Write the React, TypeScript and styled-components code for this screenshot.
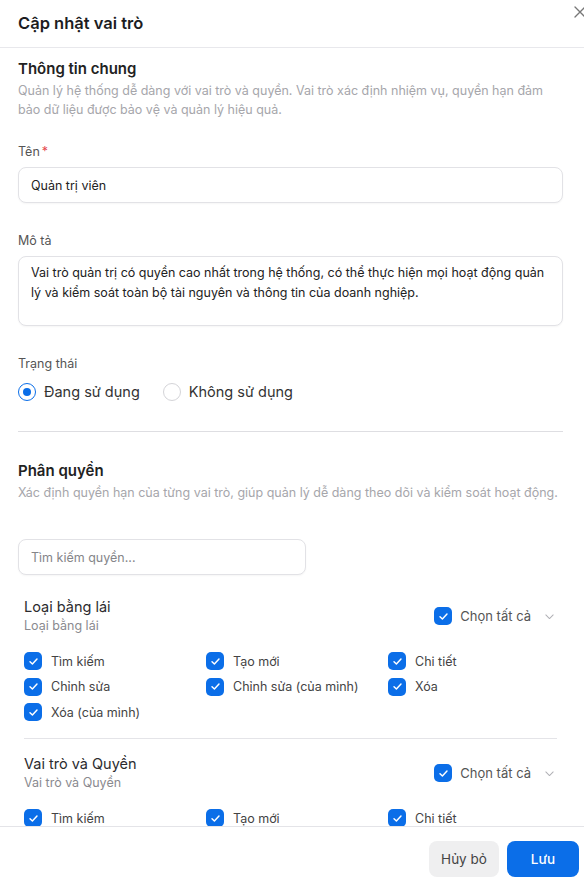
import * as React from 'react';
import styled, { createGlobalStyle } from 'styled-components';

const blue = '#0b6ee8';

const GlobalStyle = createGlobalStyle`
  html, body {
    margin: 0;
    padding: 0;
    background: #ffffff;
    font-family: Inter, "Noto Sans", "Liberation Sans", sans-serif;
    overflow: hidden;
  }
  * { box-sizing: border-box; }
`;

const Viewport = styled.div`
  width: 584px;
  height: 883px;
  overflow: hidden;
`;

const Dialog = styled.div`
  width: 596px;
  display: flex;
  flex-direction: column;
  background: #fff;
`;

const Header = styled.div`
  height: 48px;
  padding: 0 10px 0 18px;
  display: flex;
  align-items: center;
  justify-content: space-between;
  border-bottom: 1px solid #e8e8ec;
`;

const Title = styled.h1`
  margin: -1px 0 0;
  font-size: 16.5px;
  font-weight: 600;
  color: #1d1d1f;
  line-height: 22px;
`;

const CloseButton = styled.button`
  border: 0;
  background: none;
  padding: 0;
  margin-top: -24px;
  color: #777;
  display: flex;
`;

const Body = styled.div`
  height: 778px;
  overflow: hidden;
  padding: 10px 33px 0 18px;
`;

const SectionTitle = styled.h2`
  margin: 0;
  font-size: 15px;
  font-weight: 600;
  line-height: 22px;
  color: #222;
`;

const SectionDesc = styled.p`
  margin: 1px 0 0;
  font-size: 12.5px;
  line-height: 19px;
  color: #a6a6ab;
`;

const Field = styled.div`
  margin-top: ${({ $gap }: { $gap: number }) => $gap}px;
`;

const Label = styled.div`
  font-size: 12.5px;
  line-height: 20px;
  color: #555;
  margin-bottom: 5px;
`;

const Required = styled.span`
  color: #e5484d;
  margin-left: 2px;
`;

const TextInput = styled.input`
  display: block;
  width: ${({ $width }: { $width?: number }) => ($width ? `${$width}px` : '100%')};
  height: 36px;
  padding: 0 12px;
  border: 1px solid #e2e2e6;
  border-radius: 8px;
  box-shadow: 0 1px 2px rgba(0, 0, 0, 0.04);
  font-family: inherit;
  font-size: 12.5px;
  color: #222;
  outline: none;
  &::placeholder {
    color: #858589;
  }
`;

const TextArea = styled.textarea`
  display: block;
  width: 100%;
  height: 70px;
  padding: 6px 12px;
  border: 1px solid #e2e2e6;
  border-radius: 8px;
  box-shadow: 0 1px 2px rgba(0, 0, 0, 0.04);
  font-family: inherit;
  font-size: 12.5px;
  line-height: 20px;
  color: #222;
  resize: none;
  outline: none;
`;

const RadioRow = styled.div`
  display: flex;
  gap: 23px;
  margin-top: 7px;
`;

const RadioOption = styled.label`
  display: flex;
  align-items: center;
  gap: 8px;
  font-size: 14.5px;
  line-height: 22px;
  color: #333;
`;

const RadioCircle = styled.span<{ $checked: boolean }>`
  width: 18px;
  height: 18px;
  border-radius: 50%;
  border: 1px solid ${({ $checked }) => ($checked ? blue : '#d4d4d8')};
  display: flex;
  align-items: center;
  justify-content: center;
  &::after {
    content: '';
    width: 8px;
    height: 8px;
    border-radius: 50%;
    background: ${({ $checked }) => ($checked ? blue : 'transparent')};
  }
`;

const Divider = styled.hr`
  margin: 28px 0 28px;
  border: 0;
  border-top: 1px solid #dedee2;
`;

const SearchWrap = styled.div`
  margin-top: 37px;
`;

const GroupList = styled.div`
  margin-top: 7px;
`;

const Group = styled.div`
  margin: 0 6px;
  padding: 15px 0 16px;
  border-bottom: 1px solid #e4e4e8;
  &:last-child {
    border-bottom: 0;
  }
`;

const GroupHeader = styled.div`
  display: flex;
  align-items: center;
  justify-content: space-between;
`;

const GroupName = styled.div`
  font-size: 14.5px;
  line-height: 20px;
  color: #2b2b2e;
`;

const GroupSub = styled.div`
  font-size: 12.5px;
  line-height: 18px;
  color: #8a8a8f;
`;

const SelectAll = styled.div`
  display: flex;
  align-items: center;
  gap: 8px;
  font-size: 13px;
  color: #555;
  margin-right: 2px;
`;

const Chevron = styled.span`
  display: flex;
  color: #b0b0b5;
  margin-left: 5px;
`;

const Grid = styled.div`
  display: grid;
  grid-template-columns: repeat(3, 182px);
  row-gap: 5.5px;
  margin-top: 16px;
`;

const CheckItem = styled.label`
  display: flex;
  align-items: center;
  gap: 9px;
  height: 20px;
  font-size: 12.5px;
  color: #444;
`;

const Box = styled.span`
  width: 18px;
  height: 18px;
  border-radius: 5px;
  background: ${blue};
  display: flex;
  align-items: center;
  justify-content: center;
  flex-shrink: 0;
`;

const Footer = styled.div`
  border-top: 1px solid #e4e4e8;
  padding: 14px 17px 14px;
  display: flex;
  justify-content: flex-end;
  gap: 8px;
`;

const Button = styled.button<{ $primary?: boolean }>`
  height: 36px;
  min-width: ${({ $primary }) => ($primary ? 72 : 70)}px;
  padding: 0 12px;
  border: 0;
  border-radius: 8px;
  font-family: inherit;
  font-size: 13.5px;
  font-weight: ${({ $primary }) => ($primary ? 500 : 400)};
  background: ${({ $primary }) => ($primary ? blue : '#efeff0')};
  color: ${({ $primary }) => ($primary ? '#fff' : '#444')};
`;

const Check = () => (
  <svg width="11" height="11" viewBox="0 0 12 12" fill="none">
    <path d="M2.2 6.2 4.8 8.7 9.8 3.4" stroke="#fff" strokeWidth="1.6" strokeLinecap="round" strokeLinejoin="round" />
  </svg>
);

const Checkbox = ({ label }: { label: string }) => (
  <CheckItem>
    <Box>
      <Check />
    </Box>
    {label}
  </CheckItem>
);

type PermissionGroup = { name: string; items: string[] };

const groups: PermissionGroup[] = [
  {
    name: 'Loại bằng lái',
    items: ['Tìm kiếm', 'Tạo mới', 'Chi tiết', 'Chỉnh sửa', 'Chỉnh sửa (của mình)', 'Xóa', 'Xóa (của mình)'],
  },
  {
    name: 'Vai trò và Quyền',
    items: ['Tìm kiếm', 'Tạo mới', 'Chi tiết', 'Chỉnh sửa', 'Chỉnh sửa (của mình)', 'Xóa', 'Xóa (của mình)'],
  },
];

export default function App() {
  return (
    <Viewport>
      <GlobalStyle />
      <Dialog>
        <Header>
          <Title>Cập nhật vai trò</Title>
          <CloseButton>
            <svg width="12" height="12" viewBox="0 0 12 12" fill="none">
              <path d="M1 1l10 10M11 1 1 11" stroke="currentColor" strokeWidth="1.3" strokeLinecap="round" />
            </svg>
          </CloseButton>
        </Header>
        <Body>
          <SectionTitle>Thông tin chung</SectionTitle>
          <SectionDesc>
            Quản lý hệ thống dễ dàng với vai trò và quyền. Vai trò xác định nhiệm vụ, quyền hạn đảm bảo dữ liệu được
            bảo vệ và quản lý hiệu quả.
          </SectionDesc>

          <Field $gap={23}>
            <Label>
              Tên<Required>*</Required>
            </Label>
            <TextInput defaultValue="Quản trị viên" />
          </Field>

          <Field $gap={28}>
            <Label>Mô tả</Label>
            <TextArea defaultValue="Vai trò quản trị có quyền cao nhất trong hệ thống, có thể thực hiện mọi hoạt động quản lý và kiểm soát toàn bộ tài nguyên và thông tin của doanh nghiệp." />
          </Field>

          <Field $gap={28}>
            <Label>Trạng thái</Label>
            <RadioRow>
              <RadioOption>
                <RadioCircle $checked />
                Đang sử dụng
              </RadioOption>
              <RadioOption>
                <RadioCircle $checked={false} />
                Không sử dụng
              </RadioOption>
            </RadioRow>
          </Field>

          <Divider />

          <SectionTitle>Phân quyền</SectionTitle>
          <SectionDesc>Xác định quyền hạn của từng vai trò, giúp quản lý dễ dàng theo dõi và kiểm soát hoạt động.</SectionDesc>

          <SearchWrap>
            <TextInput $width={288} placeholder="Tìm kiếm quyền..." />
          </SearchWrap>

          <GroupList>
            {groups.map((g) => (
              <Group key={g.name}>
                <GroupHeader>
                  <div>
                    <GroupName>{g.name}</GroupName>
                    <GroupSub>{g.name}</GroupSub>
                  </div>
                  <SelectAll>
                    <Box>
                      <Check />
                    </Box>
                    Chọn tất cả
                    <Chevron>
                      <svg width="11" height="11" viewBox="0 0 12 12" fill="none">
                        <path d="M2 4.3 6 8.2 10 4.3" stroke="currentColor" strokeWidth="1.1" strokeLinecap="round" strokeLinejoin="round" />
                      </svg>
                    </Chevron>
                  </SelectAll>
                </GroupHeader>
                <Grid>
                  {g.items.map((item) => (
                    <Checkbox key={item} label={item} />
                  ))}
                </Grid>
              </Group>
            ))}
          </GroupList>
        </Body>
        <Footer>
          <Button>Hủy bỏ</Button>
          <Button $primary>Lưu</Button>
        </Footer>
      </Dialog>
    </Viewport>
  );
}
